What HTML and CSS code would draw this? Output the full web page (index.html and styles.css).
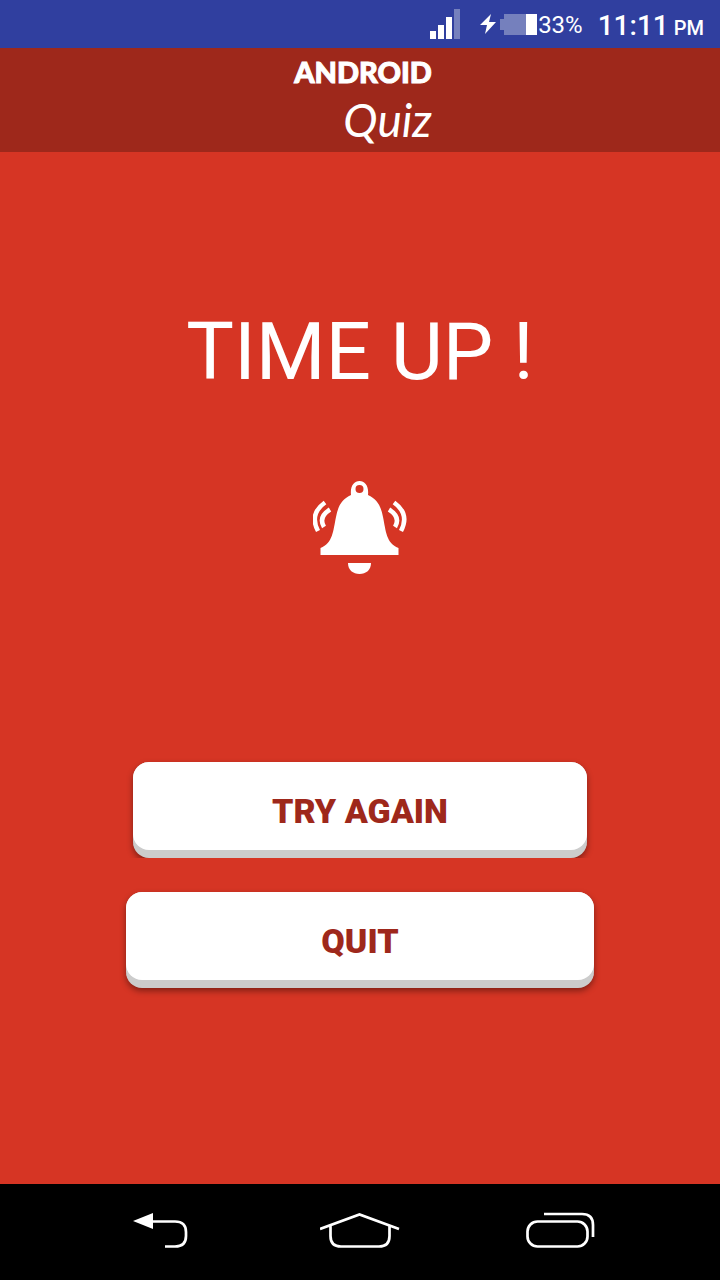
FILE: index.html
```html
<!DOCTYPE html>
<html lang="en">
<head>
<meta charset="utf-8">
<meta name="viewport" content="width=device-width, initial-scale=1">
<title>Android Quiz</title>
<link rel="stylesheet" href="styles.css">
</head>
<body>
<div class="screen">
  <div class="status">
    <svg class="signal" width="30" height="30" viewBox="0 0 30 30" fill="#fff" aria-hidden="true"><path d="M0 22h6v8H0zM8 16h6v14H8zM16 8h6v22h-6z"/><path d="M24 0h6v30h-6z" fill="#7580bd"/></svg>
    <svg class="bolt" width="16" height="20" viewBox="0 0 16 20" fill="#fff" aria-hidden="true"><path d="M11 0L0 11h7L5 20 16 8H9z"/></svg>
    <svg class="battery" width="37" height="21" viewBox="0 0 37 21" aria-hidden="true"><path d="M0 5h4V0h22v21H4v-5H0z" fill="#7580bd"/><path d="M26 0h11v21H26z" fill="#fff"/></svg>
    <span class="percent">33%</span>
    <span class="clock"><span>11:11</span> <span class="meridiem">PM</span></span>
  </div>
  <header class="header">
    <h1 class="logo"><span class="logo-top">ANDROID</span><span class="logo-bottom">Quiz</span></h1>
  </header>
  <main class="content">
    <h2 class="title">TIME UP !</h2>
    <svg class="bell" width="94" height="94" viewBox="0 0 94 94" fill="#fff" aria-hidden="true">
      <path fill-rule="evenodd" d="M38 14C37 5 41 0 46.500 0S56 5 55 14C64 18 68 25 70 36C73 50 73 62 85.500 67V74H7.500V67C20 62 20 50 23 36C25 25 29 18 38 14ZM46.500 4a4 4 0 1 0 0 8a4 4 0 1 0 0-8Z"/>
      <path d="M35 82H58C58 89 53 93 46.500 93S35 89 35 82Z"/>
      <g fill="none" stroke="#fff" stroke-width="4.500"><path d="M12 21.500Q-4 33 5 50M17 28.500Q5 36 11 46M81 21.500Q97 33 88 50M76 28.500Q88 36 82 46"/></g>
    </svg>
    <div class="actions">
      <button class="button button-retry" type="button">TRY AGAIN</button>
      <button class="button button-quit" type="button">QUIT</button>
    </div>
  </main>
  <nav class="navbar" aria-label="System">
    <button class="key" type="button" aria-label="Back"><svg width="80" height="40" viewBox="0 0 80 40" fill="none" stroke="#fff" stroke-width="2.700"><path d="M32 9.500H55Q66 9.500 66 20V24Q66 34.500 55 34.500H45"/><path d="M13 9L33 1V17Z" fill="#fff" stroke="none"/></svg></button>
    <button class="key" type="button" aria-label="Home"><svg width="80" height="40" viewBox="0 0 80 40" fill="none" stroke="#fff" stroke-width="2.700"><path d="M0 17L39.500 2.500L79 17M10.500 14V24Q10.500 34.500 21 34.500H59Q69.500 34.500 69.500 24V14"/></svg></button>
    <button class="key" type="button" aria-label="Recent apps"><svg width="80" height="40" viewBox="0 0 80 40" fill="none" stroke="#fff" stroke-width="2.700"><rect x="7.500" y="9.500" width="60" height="25" rx="10"/><path d="M24 2H62Q73 2 73 13V25"/></svg></button>
  </nav>
</div>
</body>
</html>
```
FILE: styles.css
```css
* { box-sizing: border-box; }

body {
  margin: 0;
  font-family: Roboto, "Liberation Sans", sans-serif;
  color: #fff;
}

.screen {
  display: flex;
  flex-direction: column;
  min-height: 100vh;
  background: #d63524;
}

.status {
  display: flex;
  align-items: center;
  justify-content: flex-end;
  height: 48px;
  padding-right: 16px;
  background: #303f9f;
}

.bolt { margin-left: 20px; }

.battery { margin: 0 1px 0 4px; }

.percent {
  padding-top: 2px;
  font-size: 24px;
}

.clock {
  display: flex;
  gap: 5px;
  align-items: baseline;
  margin-left: 15px;
  padding-top: 2px;
  font-size: 28px;
  font-weight: 500;
}

.meridiem { font-size: 20px; }

.header {
  display: flex;
  justify-content: center;
  height: 104px;
  padding: 8px 0 0 6px;
  background: #9e281b;
}

.logo {
  display: flex;
  flex-direction: column;
  align-items: flex-end;
  gap: 4px;
  margin: 0;
}

.logo-top {
  font-family: Lato, sans-serif;
  font-size: 29px;
  font-weight: 900;
  line-height: 32px;
  -webkit-text-stroke: 1px #fff;
}

.logo-bottom {
  font-family: Lato, sans-serif;
  font-size: 46px;
  font-style: italic;
  font-weight: 400;
  line-height: 56px;
}

.content {
  display: flex;
  flex: 1;
  flex-direction: column;
  align-items: center;
  padding: 152px 0 32px;
}

.title {
  margin: 0;
  font-size: 80px;
  font-weight: 400;
  line-height: 96px;
}

.bell { margin-top: 81px; }

.actions {
  display: flex;
  flex-direction: column;
  align-items: center;
  gap: 34px;
  width: 100%;
  margin-top: 187px;
}

.button {
  height: 96px;
  padding: 10px 0 0;
  border: 0;
  border-bottom: 8px solid #ccc;
  border-radius: 16px;
  background: #ccc;
  color: #9e281b;
  font-family: inherit;
  font-size: 34px;
  font-weight: 900;
  position: relative;
  isolation: isolate;
}

.button::before {
  content: "";
  position: absolute;
  inset: 0;
  z-index: -1;
  border-radius: 16px;
  background: #fff;
}

.button-retry {
  width: 63%;
  box-shadow: 0 3px 6px rgba(0, 0, 0, 0.4);
  clip-path: inset(-8px -8px 0);
}

.button-quit {
  width: 65%;
  box-shadow: 0 3px 6px rgba(0, 0, 0, 0.4);
}

.navbar {
  display: flex;
  align-items: center;
  justify-content: space-evenly;
  height: 96px;
  background: #000;
}

.key {
  display: flex;
  padding: 0;
  border: 0;
  background: none;
}
```
